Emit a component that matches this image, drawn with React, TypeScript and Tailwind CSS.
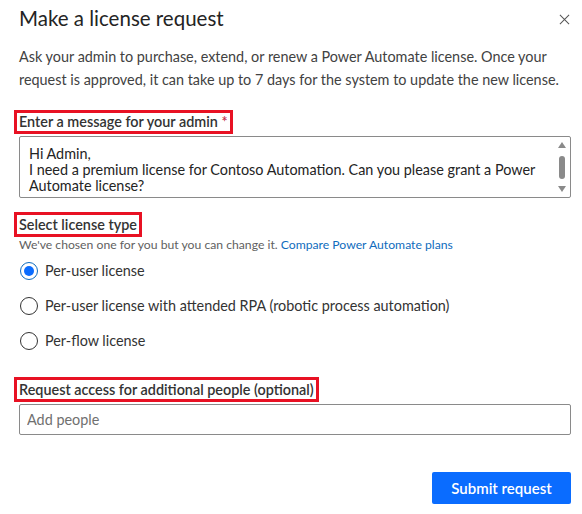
import { useState } from "react";

const options = [
  "Per-user license",
  "Per-user license with attended RPA (robotic process automation)",
  "Per-flow license",
];

function Radio({ checked }: { checked: boolean }) {
  return (
    <span
      className={
        checked
          ? "w-[18px] h-[18px] rounded-full border border-[#0f6cbd] flex items-center justify-center shrink-0"
          : "w-[18px] h-[18px] rounded-full border border-[#333] shrink-0"
      }
    >
      {checked && <span className="w-[10px] h-[10px] rounded-full bg-[#0a6cff]"></span>}
    </span>
  );
}

export default function App() {
  const [selected, setSelected] = useState(0);

  return (
    <div
      className="w-[582px] h-[514px] bg-white text-[#242424] overflow-hidden"
      style={{ fontFamily: '"Segoe UI", Lato, "Noto Sans", sans-serif' }}
    >
      <div className="flex items-start justify-between pl-[19px] pr-[11px] pt-[5px]">
        <h1 className="text-[20.5px] leading-[27px] font-normal">Make a license request</h1>
        <svg className="w-[11px] h-[11px] mt-[9px] mr-[1px]" viewBox="0 0 12 12" fill="none">
          <path d="M1 1l10 10M11 1L1 11" stroke="#555" strokeWidth="1.1" />
        </svg>
      </div>

      <p className="mt-[13px] px-[19px] text-[14.4px] leading-[23px] text-[#424242]">
        Ask your admin to purchase, extend, or renew a Power Automate license. Once your
        request is approved, it can take up to 7 days for the system to update the new license.
      </p>

      <div className="mt-[19px] ml-[14px] inline-block border-[3px] border-[#e81123] px-[2px]">
        <div className="text-[14.4px] leading-[18px] font-semibold text-[#333]">
          Enter a message for your admin <span className="text-[#c4314b]">*</span>
        </div>
      </div>

      <div className="ml-[19px] mr-[11px] mt-[2px] h-[62px] border border-[#8a8a8a] rounded-[2px] flex">
        <div className="flex-1 pl-[9px] pt-[9px] text-[14.4px] leading-[16px] text-[#242424]">
          Hi Admin,
          <br />
          I need a premium license for Contoso Automation. Can you please grant a Power
          <br />
          Automate license?
        </div>
        <div className="w-[14px] flex flex-col items-center justify-between py-[5px] mr-[1px]">
          <svg className="w-[8px] h-[6px]" viewBox="0 0 8 6">
            <path d="M0 6L4 0l4 6z" fill="#8a8a8a" />
          </svg>
          <span className="w-[6px] h-[23px] rounded-full bg-[#8a8a8a]"></span>
          <svg className="w-[8px] h-[6px]" viewBox="0 0 8 6">
            <path d="M0 0h8L4 6z" fill="#8a8a8a" />
          </svg>
        </div>
      </div>

      <div className="mt-[14px] ml-[14px] inline-block border-[3px] border-[#e81123] px-[2px]">
        <div className="text-[14.4px] leading-[19px] font-semibold text-[#333]">Select license type</div>
      </div>

      <p className="px-[19px] text-[12.2px] leading-[16px] text-[#616161]">
        We've chosen one for you but you can change it.{" "}
        <a className="text-[#0f6cbd]" href="#">
          Compare Power Automate plans
        </a>
      </p>

      <div className="mt-[9px] flex flex-col gap-[17px] pl-[20px]">
        {options.map((o, i) => (
          <label key={o} className="flex items-center gap-[7px] cursor-pointer h-[18px]" onClick={() => setSelected(i)}>
            <Radio checked={selected === i} />
            <span className="text-[14.4px] leading-[18px] text-[#333]">{o}</span>
          </label>
        ))}
      </div>

      <div className="mt-[27px] ml-[14px] inline-block border-[3px] border-[#e81123] px-[2px]">
        <div className="text-[14.4px] leading-[19px] font-semibold text-[#333]">
          Request access for additional people (optional)
        </div>
      </div>

      <div className="ml-[19px] mr-[11px] mt-[2px] h-[31px] border border-[#8a8a8a] rounded-[2px] flex items-center pl-[7px]">
        <input
          className="w-full outline-none text-[14.4px] placeholder:text-[#707070]"
          placeholder="Add people"
        />
      </div>

      <div className="flex justify-end pr-[11px] mt-[37px]">
        <button className="w-[139px] h-[32px] rounded-[2px] bg-[#0a6cff] text-white text-[15px] font-semibold">
          Submit request
        </button>
      </div>
    </div>
  );
}
